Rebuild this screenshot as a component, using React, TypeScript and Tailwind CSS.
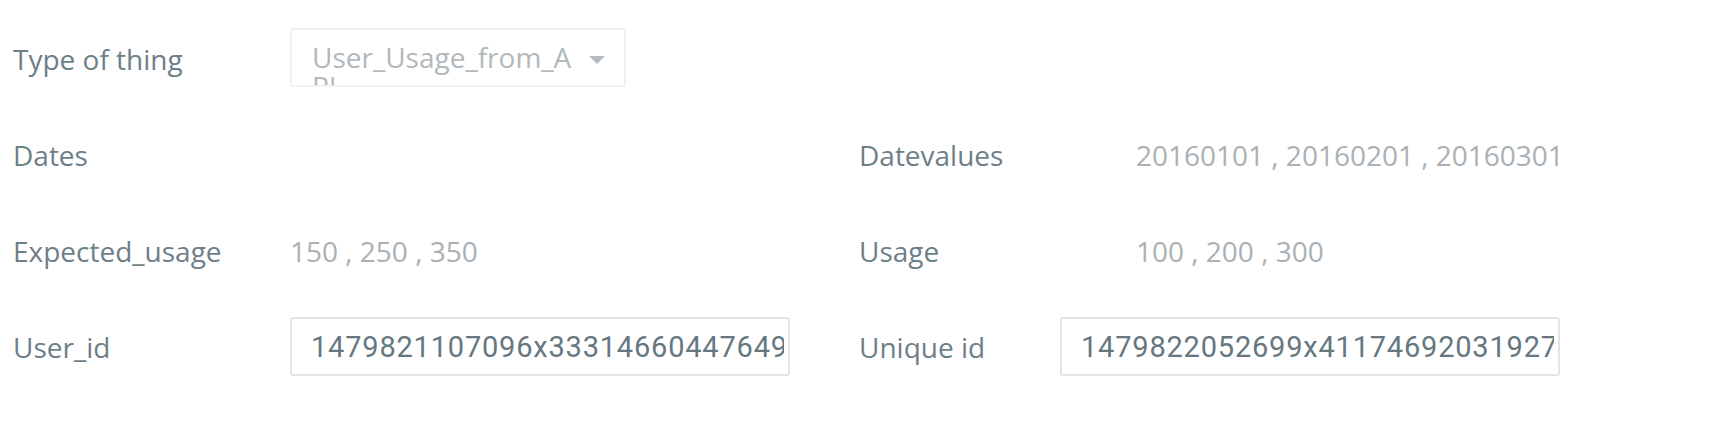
const rows = [
  { left: "Dates", leftValue: "", right: "Datevalues", rightValue: "20160101 , 20160201 , 20160301" },
  { left: "Expected_usage", leftValue: "150 , 250 , 350", right: "Usage", rightValue: "100 , 200 , 300" },
];

function Label({ children, w = "w-[277px]" }: { children: React.ReactNode; w?: string }) {
  return <div className={`${w} shrink-0 text-[28px] text-[#6d7f88]`}>{children}</div>;
}

function IdInput({ value }: { value: string }) {
  return (
    <input
      readOnly
      value={value}
      className="w-[500px] h-[59px] shrink-0 rounded-[3px] border-2 border-[#e2e4e5] bg-white pl-[19px] pr-[4px] text-[29px] tracking-[0.8px] text-[#66777f] outline-none [font-family:Roboto,sans-serif]"
    />
  );
}

export default function App() {
  return (
    <div className="w-[1712px] h-[434px] bg-white pt-[11px] pl-[13px] [font-family:'Open_Sans',sans-serif]">
      <div className="flex items-center h-[96px]">
        <Label>Type of thing</Label>
        <div className="flex items-start justify-between w-[336px] h-[59px] -mt-[4px] rounded-[3px] border-2 border-[#f0f1f1] pl-[20px] pr-[19px] overflow-hidden">
          <div className="w-[266px] pt-[13px] text-[28px] leading-[29px] text-[#b1b9bd] break-all">
            User_Usage_from_API
          </div>
          <div className="mt-[26px] w-0 h-0 border-l-[8px] border-r-[8px] border-t-[8px] border-l-transparent border-r-transparent border-t-[#b6bcc0]" />
        </div>
      </div>
      {rows.map((r) => (
        <div key={r.left} className="flex items-center h-[96px]">
          <div className="flex items-center w-[846px]">
            <Label>{r.left}</Label>
            <div className="text-[28px] text-[#a9b1b6]">{r.leftValue}</div>
          </div>
          <Label>{r.right}</Label>
          <div className="text-[28px] text-[#a9b1b6]">{r.rightValue}</div>
        </div>
      ))}
      <div className="flex items-center h-[95px]">
        <div className="flex items-center w-[846px]">
          <Label>User_id</Label>
          <IdInput value="1479821107096x333146604476496000" />
        </div>
        <Label w="w-[201px]">Unique id</Label>
        <IdInput value="1479822052699x411746920319274000" />
      </div>
    </div>
  );
}
